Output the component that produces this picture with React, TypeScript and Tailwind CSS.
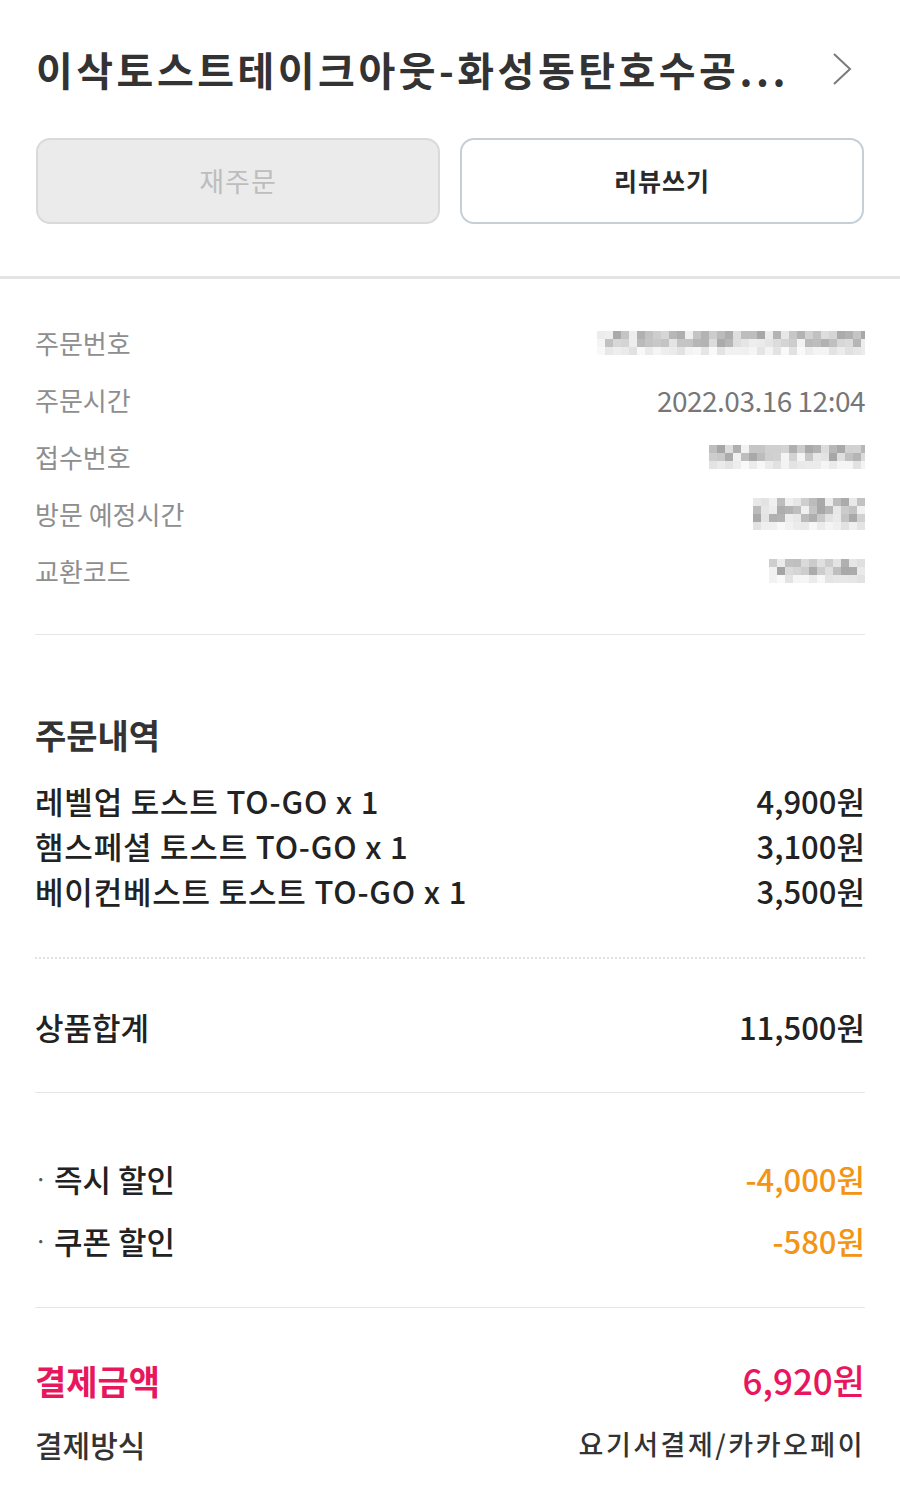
import React from "react";

const FONT = '"Noto Sans CJK KR", "Noto Sans", sans-serif';

function Mosaic({ width, height, seed }: { width: number; height: number; seed: number }) {
  const cell = 8;
  const cols = Math.ceil(width / cell);
  const rows = Math.ceil(height / cell);
  let s = seed;
  const rnd = () => {
    s = (s * 9301 + 49297) % 233280;
    return s / 233280;
  };
  const rects: React.ReactNode[] = [];
  for (let r = 0; r < rows; r++) {
    for (let c = 0; c < cols; c++) {
      const edge = r === rows - 1;
      const v = rnd();
      const base = edge ? 225 + Math.floor(v * 25) : 165 + Math.floor(v * 80);
      rects.push(
        <rect
          key={`${r}-${c}`}
          x={c * cell}
          y={r * cell}
          width={cell}
          height={cell}
          fill={`rgb(${base},${base},${base})`}
        />
      );
    }
  }
  return (
    <svg width={width} height={height} viewBox={`0 0 ${width} ${height}`} className="block">
      {rects}
    </svg>
  );
}

function InfoRow({ label, children }: { label: string; children: React.ReactNode }) {
  return (
    <div className="flex h-[57px] items-center justify-between">
      <span className="text-[26px] text-[#8e8e8e]">{label}</span>
      {children}
    </div>
  );
}

function ItemRow({ name, price }: { name: string; price: string }) {
  return (
    <div className="flex h-[45px] items-center justify-between text-[31px] font-medium text-[#222]">
      <span className="tracking-[0.8px]">{name}</span>
      <span>{price}</span>
    </div>
  );
}

export default function App() {
  return (
    <div className="min-h-[1506px] w-[900px] bg-white" style={{ fontFamily: FONT }}>
      {/* Header */}
      <div className="flex h-[138px] items-start justify-between px-[36px] pt-[44px]">
        <h1 className="text-[40px] font-bold leading-[50px] tracking-[3.5px] text-[#333] whitespace-nowrap">
          이삭토스트테이크아웃-화성동탄호수공...
        </h1>
        <svg width="24" height="36" viewBox="0 0 24 36" className="mr-[10px] mt-[7px]">
          <path d="M4 3 L20 18 L4 33" fill="none" stroke="#7a7a7a" strokeWidth="2" />
        </svg>
      </div>

      {/* Buttons */}
      <div className="flex gap-[20px] px-[36px]">
        <button className="flex h-[86px] flex-1 items-center justify-center rounded-[14px] border-2 border-[#dadada] bg-[#ebebeb] text-[27px] tracking-[1px] text-[#bdbdbd]">
          재주문
        </button>
        <button className="flex h-[86px] flex-1 items-center justify-center rounded-[14px] border-2 border-[#c6cfd5] bg-white text-[25px] font-bold tracking-[1px] text-[#2a2a2a]">
          리뷰쓰기
        </button>
      </div>

      <div className="mt-[52px] h-[3px] bg-[#e4e4e4]" />

      {/* Info */}
      <div className="px-[35px]">
        <div className="pt-[35px] pb-[35px]">
          <InfoRow label="주문번호">
            <Mosaic width={268} height={24} seed={17} />
          </InfoRow>
          <InfoRow label="주문시간">
            <span className="text-[28px] tracking-[-0.5px] text-[#777]">2022.03.16 12:04</span>
          </InfoRow>
          <InfoRow label="접수번호">
            <Mosaic width={156} height={24} seed={53} />
          </InfoRow>
          <InfoRow label="방문 예정시간">
            <Mosaic width={112} height={32} seed={91} />
          </InfoRow>
          <InfoRow label="교환코드">
            <Mosaic width={96} height={24} seed={133} />
          </InfoRow>
        </div>
        <div className="h-px bg-[#e6e6e6]" />

        {/* Order details */}
        <h2 className="mt-[78px] text-[34px] font-bold leading-[44px] text-[#333]">주문내역</h2>
        <div className="mt-[22px]">
          <ItemRow name="레벨업 토스트 TO-GO x 1" price="4,900원" />
          <ItemRow name="햄스페셜 토스트 TO-GO x 1" price="3,100원" />
          <ItemRow name="베이컨베스트 토스트 TO-GO x 1" price="3,500원" />
        </div>

        <div className="mt-[43px] border-t-2 border-dotted border-[#e2e2e2]" />

        <div className="mt-[38px] flex h-[60px] items-center justify-between text-[31px] font-medium text-[#222]">
          <span>상품합계</span>
          <span>11,500원</span>
        </div>

        <div className="mt-[35px] h-px bg-[#e6e6e6]" />

        <div className="mt-[55px]">
          <div className="flex h-[62px] items-center justify-between text-[31px] font-medium">
            <span className="flex items-center text-[#222]">
              <span className="w-[19px] text-[20px] text-[#555]">·</span>
              즉시 할인
            </span>
            <span className="text-[#f39415]">-4,000원</span>
          </div>
          <div className="flex h-[62px] items-center justify-between text-[31px] font-medium">
            <span className="flex items-center text-[#222]">
              <span className="w-[19px] text-[20px] text-[#555]">·</span>
              쿠폰 할인
            </span>
            <span className="text-[#f39415]">-580원</span>
          </div>
        </div>

        <div className="mt-[35px] h-px bg-[#e6e6e6]" />

        <div className="mt-[40px]">
          <div className="flex h-[64px] items-center justify-between">
            <span className="text-[34px] font-bold text-[#e8175d]">결제금액</span>
            <span className="text-[35px] font-medium text-[#e8175d]">6,920원</span>
          </div>
          <div className="flex h-[64px] items-center justify-between">
            <span className="text-[30px] font-medium text-[#333]">결제방식</span>
            <span className="text-[27px] font-medium tracking-[2.5px] text-[#333]">요기서결제/카카오페이</span>
          </div>
        </div>
      </div>
    </div>
  );
}
